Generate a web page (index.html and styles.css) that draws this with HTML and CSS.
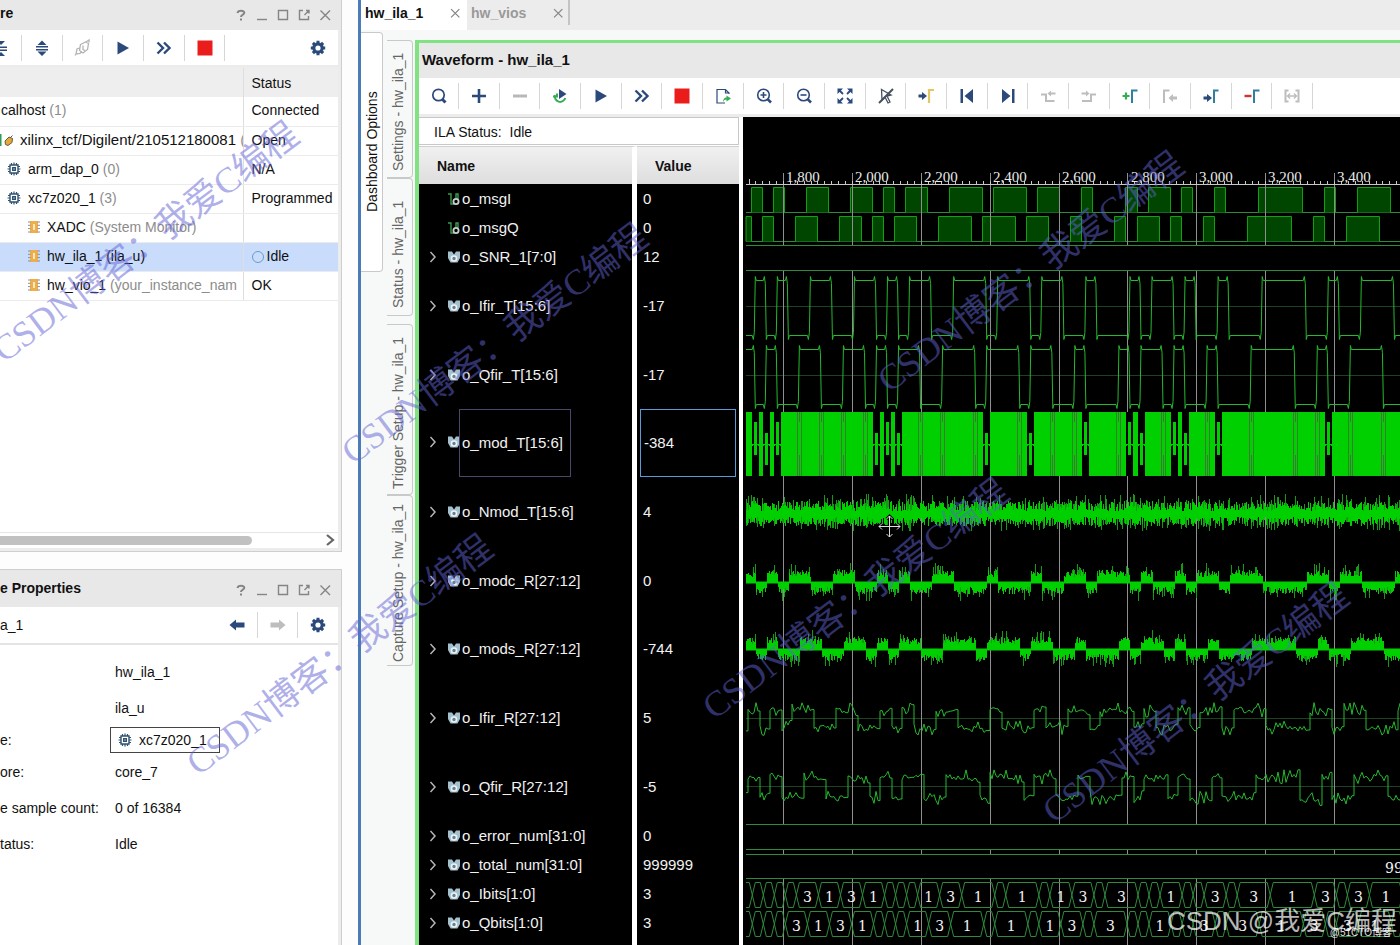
FILE: index.html
```
<!DOCTYPE html>
<html lang="en">
<head>
<meta charset="utf-8">
<title>Hardware Manager - hw_ila_1</title>
<link rel="stylesheet" href="styles.css">
</head>
<body>
<svg class="defs" aria-hidden="true">
  <symbol id="i-collapse" viewBox="0 0 24 24"><path class="navy" d="M6 10.500h12v1.500H6zM6 13.500h12V15H6zM8 5h8l-4 4zM8 20h8l-4-4z"/></symbol>
  <symbol id="i-expand" viewBox="0 0 24 24"><path class="navy" d="M6 10h12v1.500H6zM6 13h12v1.500H6zM7.500 9h9L12 4.500zM7.500 15.500h9L12 20z"/></symbol>
  <symbol id="i-plug" viewBox="0 0 24 24"><g fill="none" stroke="#b4b4b4" stroke-width="1.300"><path d="M9.500 8.500l5-2.500 3 1.500-1 6-4.500 3.500-3.500-2.500zM15 6l3-2v2.500M12 9.500v4l2 1M8.500 12l-2.500 1-1 5 4-.5 2-2M5 18l-1 1.500"/></g></symbol>
  <symbol id="i-play" viewBox="0 0 24 24"><path class="navy" d="M6.500 5.500v13L18 12z"/></symbol>
  <symbol id="i-fast" viewBox="0 0 24 24"><path class="nline" stroke-width="2.400" d="M5.500 6.500l5.500 5.500-5.500 5.500M12 6.500l5.500 5.500-5.500 5.500"/></symbol>
  <symbol id="i-stop" viewBox="0 0 24 24"><path fill="#ea1c1c" d="M4.500 4.500h15v15h-15z"/></symbol>
  <symbol id="i-gear" viewBox="0 0 24 24"><g stroke="#2b4a7b" fill="none"><circle cx="12" cy="12" r="4.200" stroke-width="3.200"/><path stroke-width="3" d="M12 4.800v2.500M12 16.700v2.500M4.800 12h2.500M16.700 12h2.500M6.900 6.900l1.700 1.700M15.400 15.400l1.700 1.700M17.100 6.900l-1.700 1.700M8.600 15.400l-1.700 1.700"/></g></symbol>
  <symbol id="i-search" viewBox="0 0 24 24"><circle class="nline" stroke-width="1.700" cx="11.500" cy="11" r="5.700"/><path class="nline" stroke-width="3" d="M15.500 15.500l3 3"/></symbol>
  <symbol id="i-plus" viewBox="0 0 24 24"><path class="nline" stroke-width="2.600" d="M12 5v14M5 12h14"/></symbol>
  <symbol id="i-minus" viewBox="0 0 24 24"><path fill="#b8b8b8" d="M5 10.500h14v3H5z"/></symbol>
  <symbol id="i-rerun" viewBox="0 0 24 24"><path fill="none" stroke="#35ad55" stroke-width="2" d="M7 11a5.200 5.200 0 1 0 10.300 3M5 12.500h4V9.500"/><path class="navy" d="M11 5v10l7.500-5z"/></symbol>
  <symbol id="i-export" viewBox="0 0 24 24"><path class="nline" stroke-width="1.200" d="M18 10V9l-3.500-3.500H6v13.500h8M14.500 5.500V9H18"/><path fill="#35ad55" d="M15.500 11.500l4.500 3-4.500 3v-2c-2 0-3 1-3.500 3 0-3 1-5 3.500-5z"/></symbol>
  <symbol id="i-zin" viewBox="0 0 24 24"><circle class="nline" stroke-width="1.600" cx="11.500" cy="11" r="5.800"/><path class="nline" stroke-width="1.600" d="M8.500 11h6M11.500 8v6"/><path class="nline" stroke-width="2.600" d="M15.800 15.300l3.200 3.200"/></symbol>
  <symbol id="i-zout" viewBox="0 0 24 24"><circle class="nline" stroke-width="1.600" cx="11.500" cy="11" r="5.800"/><path class="nline" stroke-width="1.600" d="M8.500 11h6"/><path class="nline" stroke-width="2.600" d="M15.800 15.300l3.200 3.200"/></symbol>
  <symbol id="i-fit" viewBox="0 0 24 24"><path class="navy" d="M4.500 4.500H10L4.500 10zM19.500 4.500H14l5.500 5.500zM4.500 19.500H10L4.500 14zM19.500 19.500H14l5.500-5.500z"/><path class="nline" stroke-width="1.800" d="M6 6l4 4M18 6l-4 4M6 18l4-4M18 18l-4-4"/></symbol>
  <symbol id="i-nocur" viewBox="0 0 24 24"><g fill="none" stroke="#454f5c"><path stroke-width="1.300" d="M7.500 5.500l9.500 5.500-4 1 3 6-2 1-3-6-3 3z"/><path stroke-width="2" d="M5 19L19 5"/></g></symbol>
  <symbol id="i-tocur" viewBox="0 0 24 24"><path class="navy" d="M4.500 10.500H8V8l5 4-5 4v-2.500H4.500z"/><path fill="none" stroke="#e2c766" stroke-width="2.200" d="M15 19V6h5"/></symbol>
  <symbol id="i-first" viewBox="0 0 24 24"><path class="navy" d="M5.500 5H8v14H5.500zM18 5v14l-8.500-7z"/></symbol>
  <symbol id="i-last" viewBox="0 0 24 24"><path class="navy" d="M16 5h2.500v14H16zM6 5v14l8.500-7z"/></symbol>
  <symbol id="i-prev" viewBox="0 0 24 24"><path class="gline" d="M5 10.500h5v6.500h8.500"/><path class="grey" d="M11.500 9.500L15 6.500v2h4.500v2H15v2z"/></symbol>
  <symbol id="i-next" viewBox="0 0 24 24"><path class="gline" d="M5 17h9v-6.500h5"/><path class="grey" d="M12.500 9.500L9 6.500v2H4.500v2H9v2z"/></symbol>
  <symbol id="i-addm" viewBox="0 0 24 24"><path fill="none" stroke="#35ad55" stroke-width="2.200" d="M4.500 12h7M8 8.500v7"/><path class="mline" d="M14 19V6.500h5.500"/></symbol>
  <symbol id="i-backm" viewBox="0 0 24 24"><path class="gline" d="M6 19V6.500h5.500"/><path class="grey" d="M10.500 14l4.500-4v2.500h4v3h-4V18z"/></symbol>
  <symbol id="i-fwdm" viewBox="0 0 24 24"><path class="navy" d="M4.500 12.500H8V10l5 4-5 4v-2.500H4.500z"/><path class="mline" d="M15 19V6.500h4.500"/></symbol>
  <symbol id="i-delm" viewBox="0 0 24 24"><path fill="#d0342c" d="M4.500 10.800h7v2.400h-7z"/><path class="mline" d="M14 19V6.500h5.500"/></symbol>
  <symbol id="i-swap" viewBox="0 0 24 24"><path class="gline" d="M5.500 5.500v13M18.500 5.500v13M5 6.500h3.500M5 17.500h3.500M15.500 6.500H19M15.500 17.500H19"/><path fill="none" stroke="#bdbdbd" stroke-width="1.300" d="M7.500 12h9M10 9.500L7.500 12l2.500 2.500M14 9.500l2.500 2.500-2.500 2.500"/></symbol>
  <symbol id="i-left" viewBox="0 0 24 24"><path class="navy" d="M4.500 12L11 6.500v3h8.500v5H11v3z"/></symbol>
  <symbol id="i-right" viewBox="0 0 24 24"><path class="grey" d="M19.500 12L13 6.500v3H4.500v5H13v3z"/></symbol>
  <symbol id="w-help" viewBox="0 0 16 16"><path class="wline bold" d="M4.500 6c.5-3 7-3 6.800 0C11.100 7.800 8 7.500 8 10M8 11.500v2"/></symbol>
  <symbol id="w-min" viewBox="0 0 16 16"><path class="wline" d="M3 12.500h10"/></symbol>
  <symbol id="w-max" viewBox="0 0 16 16"><path class="wline" d="M3.500 3.500h9v9h-9z"/></symbol>
  <symbol id="w-pop" viewBox="0 0 16 16"><path class="wline" d="M7 3.500H3.500v9h9V9M10 3.500h3v3M13 3.500L8.500 8"/></symbol>
  <symbol id="w-x" viewBox="0 0 16 16"><path class="wline" d="M3.500 3.500l9.500 9.500M13 3.500L3.500 13"/></symbol>
  <symbol id="r-chip" viewBox="0 0 14 14"><g fill="none" stroke="#2f5270"><path stroke-width="1.400" d="M3 3h8v8H3z"/><path stroke-width="1.400" d="M5.700 5.700h2.600v2.600H5.700z"/><path stroke-width="1.200" d="M4.500 1v2M7 .5V3M9.500 1v2M4.500 11v2M7 11v2.500M9.500 11v2M1 4.500h2M.5 7H3M1 9.500h2M11 4.500h2M11 7h2.500M11 9.500h2"/></g></symbol>
  <symbol id="r-core" viewBox="0 0 14 14"><path fill="#eeae4c" d="M3 1h8v12H3z"/><path fill="none" stroke="#8a8f98" stroke-width="1" d="M1 2h2.500M1 5.300h2.500M1 8.600h2.500M1 12h2.500M10.500 2H13M10.500 5.300H13M10.500 8.600H13M10.500 12H13"/><path stroke="#fff6dc" stroke-width="1.600" d="M7 4v6"/></symbol>
  <symbol id="r-plug" viewBox="0 0 14 14"><path fill="#2e9c55" d="M0 1h1.500v12H0z"/><path fill="#e2a93b" stroke="#6b5a35" d="M5 8l4-4 3.500 1.500-.5 4-4 3-2.500-1z"/><path stroke="#555" d="M10 5l2.500-2.500"/></symbol>
  <symbol id="s-bit" viewBox="0 0 14 14"><path fill="none" stroke="#3d9a50" stroke-width="1.400" d="M1 2h3v10h3.500M9 6V2h2v5"/><circle cx="9" cy="9.500" r="2.600" fill="none" stroke="#c8d0d0" stroke-width="1.800"/></symbol>
  <symbol id="s-bus" viewBox="0 0 14 14"><path fill="#a3c0ce" d="M1 1.500h4l2 3 2-3h4V8l-2.500 4.500h-7L1 8z"/><circle cx="7" cy="8.500" r="2.500" fill="#66808f" stroke="#eef2f4" stroke-width="1.600"/></symbol>
  <symbol id="s-chev" viewBox="0 0 10 14"><path fill="none" stroke="#b5b5b5" stroke-width="1.500" d="M2.500 2l4.500 5-4.500 5"/></symbol>
</svg>

<div class="app">
  <aside class="side">
    <section class="panel tree-panel">
      <header class="panel-head"><h2>re</h2>
        <div class="win"><button aria-label="Help"><svg><use href="#w-help"/></svg></button><button aria-label="Minimize"><svg><use href="#w-min"/></svg></button><button aria-label="Maximize"><svg><use href="#w-max"/></svg></button><button aria-label="Float"><svg><use href="#w-pop"/></svg></button><button aria-label="Close"><svg><use href="#w-x"/></svg></button></div>
      </header>
      <div class="bar bar-tree">
        <button aria-label="Collapse all"><svg><use href="#i-collapse"/></svg></button><button aria-label="Expand all"><svg><use href="#i-expand"/></svg></button><button aria-label="Connect"><svg><use href="#i-plug"/></svg></button><button aria-label="Run trigger"><svg><use href="#i-play"/></svg></button><button aria-label="Run immediate"><svg><use href="#i-fast"/></svg></button><button aria-label="Stop"><svg><use href="#i-stop"/></svg></button><button class="gear" aria-label="Settings"><svg><use href="#i-gear"/></svg></button>
      </div>
      <div class="tree-wrap">
        <table class="tree">
          <thead><tr><th class="c-name"></th><th>Status</th></tr></thead>
          <tbody>
            <tr><td class="l0">calhost <i>(1)</i></td><td>Connected</td></tr>
            <tr><td class="l1"><svg><use href="#r-plug"/></svg><span class="addr">xilinx_tcf/Digilent/210512180081 <i>(2)</i></span></td><td>Open</td></tr>
            <tr><td class="l2"><svg><use href="#r-chip"/></svg>arm_dap_0 <i>(0)</i></td><td>N/A</td></tr>
            <tr><td class="l2"><svg><use href="#r-chip"/></svg>xc7z020_1 <i>(3)</i></td><td>Programmed</td></tr>
            <tr><td class="l3"><svg><use href="#r-core"/></svg>XADC <i>(System Monitor)</i></td><td></td></tr>
            <tr class="sel"><td class="l3"><svg><use href="#r-core"/></svg>hw_ila_1 (ila_u)</td><td><span class="ring"></span>Idle</td></tr>
            <tr><td class="l3"><svg><use href="#r-core"/></svg>hw_vio_1 <i>(your_instance_nam</i></td><td>OK</td></tr>
          </tbody>
        </table>
      </div>
      <div class="hscroll"><div class="thumb"></div><svg viewBox="0 0 12 16"><path fill="none" stroke="#666" stroke-width="2.200" d="M3 3l6 5-6 5"/></svg></div>
    </section>

    <section class="panel prop-panel">
      <header class="panel-head tall-head"><h2>e Properties</h2>
        <div class="win"><button aria-label="Help"><svg><use href="#w-help"/></svg></button><button aria-label="Minimize"><svg><use href="#w-min"/></svg></button><button aria-label="Maximize"><svg><use href="#w-max"/></svg></button><button aria-label="Float"><svg><use href="#w-pop"/></svg></button><button aria-label="Close"><svg><use href="#w-x"/></svg></button></div>
      </header>
      <div class="bar bar-prop"><span>a_1</span>
        <button aria-label="Back"><svg><use href="#i-left"/></svg></button><button aria-label="Forward"><svg><use href="#i-right"/></svg></button><button class="gear" aria-label="Settings"><svg><use href="#i-gear"/></svg></button>
      </div>
      <dl class="props">
        <dt></dt><dd>hw_ila_1</dd>
        <dt></dt><dd>ila_u</dd>
        <dt>e:</dt><dd><button class="device"><svg><use href="#r-chip"/></svg>xc7z020_1</button></dd>
        <dt>ore:</dt><dd>core_7</dd>
        <dt>e sample count:</dt><dd>0 of 16384</dd>
        <dt>tatus:</dt><dd>Idle</dd>
      </dl>
    </section>
  </aside>

  <main class="work">
    <nav class="tabs">
      <div class="tab on"><button>hw_ila_1</button><button class="x" aria-label="Close hw_ila_1"><svg><use href="#w-x"/></svg></button></div>
      <div class="tab"><button>hw_vios</button><button class="x" aria-label="Close hw_vios"><svg><use href="#w-x"/></svg></button></div>
    </nav>
    <div class="dash">
      <div class="rail rail-a"><button>Dashboard Options</button></div>
      <div class="rail rail-b">
        <button class="v1">Settings - hw_ila_1</button>
        <button class="v2">Status - hw_ila_1</button>
        <button class="v3">Trigger Setup - hw_ila_1</button>
        <button class="v4">Capture Setup - hw_ila_1</button>
      </div>
      <section class="wave-panel">
        <h2 class="wave-title">Waveform - hw_ila_1</h2>
        <div class="bar bar-wave">
          <button aria-label="Search"><svg><use href="#i-search"/></svg></button><button aria-label="Add"><svg><use href="#i-plus"/></svg></button><button aria-label="Remove"><svg><use href="#i-minus"/></svg></button><button aria-label="Auto re-trigger"><svg><use href="#i-rerun"/></svg></button><button aria-label="Run trigger"><svg><use href="#i-play"/></svg></button><button aria-label="Run immediate"><svg><use href="#i-fast"/></svg></button><button aria-label="Stop"><svg><use href="#i-stop"/></svg></button><button aria-label="Export"><svg><use href="#i-export"/></svg></button><button aria-label="Zoom in"><svg><use href="#i-zin"/></svg></button><button aria-label="Zoom out"><svg><use href="#i-zout"/></svg></button><button aria-label="Zoom fit"><svg><use href="#i-fit"/></svg></button><button aria-label="Free cursor"><svg><use href="#i-nocur"/></svg></button><button aria-label="Go to cursor"><svg><use href="#i-tocur"/></svg></button><button aria-label="First"><svg><use href="#i-first"/></svg></button><button aria-label="Last"><svg><use href="#i-last"/></svg></button><button aria-label="Previous transition"><svg><use href="#i-prev"/></svg></button><button aria-label="Next transition"><svg><use href="#i-next"/></svg></button><button aria-label="Add marker"><svg><use href="#i-addm"/></svg></button><button aria-label="Previous marker"><svg><use href="#i-backm"/></svg></button><button aria-label="Next marker"><svg><use href="#i-fwdm"/></svg></button><button aria-label="Delete marker"><svg><use href="#i-delm"/></svg></button><button aria-label="Swap cursors"><svg><use href="#i-swap"/></svg></button>
        </div>
        <div class="wave-body">
          <div class="signals">
            <p class="ila">ILA Status:&nbsp; Idle</p>
            <table class="sig">
              <thead><tr><th>Name</th><th>Value</th></tr></thead>
              <tbody>
                <tr><td class="bit"><svg><use href="#s-bit"/></svg>o_msgI</td><td>0</td></tr>
                <tr><td class="bit"><svg><use href="#s-bit"/></svg>o_msgQ</td><td>0</td></tr>
                <tr><td><svg class="ch"><use href="#s-chev"/></svg><svg><use href="#s-bus"/></svg>o_SNR_1[7:0]</td><td>12</td></tr>
                <tr class="tall"><td><svg class="ch"><use href="#s-chev"/></svg><svg><use href="#s-bus"/></svg>o_Ifir_T[15:6]</td><td>-17</td></tr>
                <tr class="tall"><td><svg class="ch"><use href="#s-chev"/></svg><svg><use href="#s-bus"/></svg>o_Qfir_T[15:6]</td><td>-17</td></tr>
                <tr class="tall picked"><td><svg class="ch"><use href="#s-chev"/></svg><svg><use href="#s-bus"/></svg><span>o_mod_T[15:6]</span></td><td><span>-384</span></td></tr>
                <tr class="tall"><td><svg class="ch"><use href="#s-chev"/></svg><svg><use href="#s-bus"/></svg>o_Nmod_T[15:6]</td><td>4</td></tr>
                <tr class="tall"><td><svg class="ch"><use href="#s-chev"/></svg><svg><use href="#s-bus"/></svg>o_modc_R[27:12]</td><td>0</td></tr>
                <tr class="tall"><td><svg class="ch"><use href="#s-chev"/></svg><svg><use href="#s-bus"/></svg>o_mods_R[27:12]</td><td>-744</td></tr>
                <tr class="tall"><td><svg class="ch"><use href="#s-chev"/></svg><svg><use href="#s-bus"/></svg>o_Ifir_R[27:12]</td><td>5</td></tr>
                <tr class="tall"><td><svg class="ch"><use href="#s-chev"/></svg><svg><use href="#s-bus"/></svg>o_Qfir_R[27:12]</td><td>-5</td></tr>
                <tr><td><svg class="ch"><use href="#s-chev"/></svg><svg><use href="#s-bus"/></svg>o_error_num[31:0]</td><td>0</td></tr>
                <tr><td><svg class="ch"><use href="#s-chev"/></svg><svg><use href="#s-bus"/></svg>o_total_num[31:0]</td><td>999999</td></tr>
                <tr><td><svg class="ch"><use href="#s-chev"/></svg><svg><use href="#s-bus"/></svg>o_Ibits[1:0]</td><td>3</td></tr>
                <tr><td><svg class="ch"><use href="#s-chev"/></svg><svg><use href="#s-bus"/></svg>o_Qbits[1:0]</td><td>3</td></tr>
                <tr><td></td><td></td></tr>
              </tbody>
            </table>
          </div>
          <div class="plot"><svg id="plot" role="img" aria-label="Captured waveforms"></svg></div>
        </div>
      </section>
    </div>
  </main>

  <div class="marks" aria-hidden="true">
    <span class="mark m1">CSDN博客：我爱C编程</span>
    <span class="mark m2">CSDN博客：我爱C编程</span>
    <span class="mark m3">CSDN博客：我爱C编程</span>
    <span class="mark m4">CSDN博客：我爱C编程</span>
    <span class="mark m5">CSDN博客：我爱C编程</span>
    <span class="mark m6">CSDN博客：我爱C编程</span>
    <span class="credit">CSDN @我爱C编程</span>
    <span class="credit-small">@51CTO博客</span>
  </div>
</div>
<script src="wave.js"></script>
</body>
</html>
```
FILE: styles.css
```
* { box-sizing: border-box; }
body { margin: 0; font: 14px/20px "Liberation Sans", Arial, sans-serif; color: #111; background: #fdfdfd; overflow: hidden; }
h2, p, dl, dd { margin: 0; }
h2 { font-size: 14px; line-height: 20px; }
button { border: 0; background: none; padding: 0; margin: 0; font: inherit; color: inherit; cursor: pointer; }
svg { display: block; }
i { font-style: normal; color: #8c8c8c; }
.defs { position: absolute; width: 0; height: 0; }
.navy { fill: #2b4a7b; }
.nline { fill: none; stroke: #2b4a7b; }
.grey { fill: #bdbdbd; }
.gline { fill: none; stroke: #bdbdbd; stroke-width: 2; }
.mline { fill: none; stroke: #2f7f9f; stroke-width: 2px; }
.wline { fill: none; stroke: #858585; stroke-width: 1.4px; }
.wline.bold { stroke-width: 2px; }

.app { position: relative; display: flex; height: 100vh; overflow: hidden; }
.side { flex: 0 0 342px; display: flex; flex-direction: column; gap: 17px; }
.panel { display: flex; flex-direction: column; min-height: 0; border-right: 1px solid #cfcfcf; background: #fff; overflow: hidden; box-shadow: inset -3px 0 #ececec; padding-right: 3px; }
.tree-panel { flex: 552 1 0; border-bottom: 1px solid #cfcfcf; }
.prop-panel { flex: 376 1 0; border-top: 1px solid #cfcfcf; }
.panel-head { display: flex; align-items: center; justify-content: space-between; height: 30px; margin-right: -3px; padding-right: 8px; background: #e8e8e8; }
.panel-head h2 { padding-bottom: 5px; }
.tall-head { height: 37px; }
.tall-head h2 { padding-bottom: 0; }
.tall-head .win { padding-top: 4px; }
.win { display: flex; gap: 5px; }
.win button, .win svg { width: 16px; height: 16px; }

.bar { display: flex; align-items: center; height: 36px; background: #fff; }
.bar button { flex: none; width: 41px; height: 26px; display: flex; align-items: center; justify-content: center; border-right: 1px solid #d6d6d6; }
.bar button:nth-child(3n) { width: 40px; }
.bar svg { width: 24px; height: 24px; }
.bar .gear { width: 40px; border: 0; margin-left: auto; }
.bar-tree { height: 38px; margin-left: -19px; border-bottom: 3px solid #ececec; }
.bar-prop { height: 38px; border-bottom: 2px solid #e4e4e4; }
.bar-prop span { flex: 1; }
.bar-prop .gear { margin: 0; }

.tree-wrap { flex: 1; }
.tree { width: 100%; table-layout: fixed; border-collapse: collapse; }
.tree th { height: 29px; background: #eee; font-weight: 400; text-align: left; padding: 0 0 0 8px; }
.c-name { width: 243px; }
.tree th:first-child, .tree td:first-child { border-right: 1px solid #dedede; }
.tree td { height: 29px; padding: 0 0 2px 8px; border-bottom: 1px solid #ebebeb; white-space: nowrap; overflow: hidden; }
.tree td svg { display: inline-block; width: 14px; height: 14px; vertical-align: -2px; }
.tree td.l0 { padding-left: 1px; }
.tree td.l1 { padding-left: 0; }
.tree td.l1 svg { margin-right: 6px; }
.addr { font-size: 15px; }
.tree td.l2 { padding-left: 7px; }
.tree td.l2 svg { margin-right: 7px; }
.tree td.l3 { padding-left: 27px; }
.tree td.l3 svg { margin-right: 6px; }
.tree .sel td { background: #c9dcfb; }
.ring { display: inline-block; width: 12px; height: 12px; margin-right: 3px; border: 1px solid #6b9cc4; border-radius: 50%; vertical-align: -2px; }
.hscroll { display: flex; align-items: center; justify-content: space-between; height: 19px; border-top: 1px solid #e6e6e6; border-bottom: 3px solid #ececec; padding-right: 2px; }
.thumb { width: 75%; height: 9px; background: #c1c1c1; border-radius: 0 5px 5px 0; }
.hscroll svg { width: 12px; height: 16px; }

.props { display: grid; grid-template-columns: 115px 1fr; grid-template-rows: 36px 36px 28px 36px 36px 36px; align-items: center; padding-top: 9px; }
.props dt { white-space: nowrap; }
.device { display: flex; align-items: center; gap: 7px; height: 26px; margin-left: -5px; padding: 0 12px 0 7px; border: 1px solid #444; }
.device svg { width: 14px; height: 14px; }

.work { flex: 1; min-width: 0; margin-left: 16px; border-left: 3px solid #4c7cb8; display: flex; flex-direction: column; background: #f7f9f8; }
.tabs { display: flex; height: 30px; background: #ececec; }
.tab { display: flex; align-items: flex-start; padding: 3px 5px 0 4px; font-weight: 700; color: #999; }
.tab.on { background: #fff; color: #111; width: 106px; }
.tab:last-child { width: 103px; height: 25px; border-right: 2px solid #c4c4c4; padding-right: 3px; }
.tab .x { margin: 3px 0 0 auto; }
.tab .x svg { width: 14px; height: 14px; }
.dash { flex: 1; display: flex; min-height: 0; }
.rail { flex: none; display: flex; flex-direction: column; align-items: flex-start; }
.rail button { writing-mode: vertical-rl; transform: rotate(180deg); text-align: center; border: 1px solid #c9c9c9; border-right: 0; border-radius: 4px 0 0 4px; white-space: nowrap; }
.rail-a { width: 26px; padding-top: 2px; }
.rail-a button { width: 22px; height: 240px; background: #fff; line-height: 20px; }
.rail-b { width: 28px; padding-top: 10px; color: #666; }
.rail-b button { width: 26px; padding: 0 0 6px 3px; line-height: 20px; }
.v1 { height: 138px; }
.rail-b .v2 { height: 138px; padding-bottom: 14px; }
.v3 { height: 171px; margin-top: 8px; }
.v4 { height: 171px; }

.wave-panel { flex: 1; min-width: 0; margin-top: 10px; border: solid #80e280; border-width: 3px 0 0 4px; display: flex; flex-direction: column; background: #fff; }
.wave-title { flex: none; height: 35px; padding: 7px 0 0 3px; background: #e8e8e8; font-size: 15px; }
.bar-wave { flex: none; height: 39px; border-bottom: 3px solid #ececec; overflow: hidden; }
.bar-wave button:first-child { width: 40px; }
.wave-body { flex: 1; display: flex; min-height: 0; overflow: hidden; font-size: 15px; }
.signals { flex: 0 0 320px; margin-right: 4px; }
.ila { height: 28px; padding: 4px 0 0 15px; border: 1px solid #c8c8c8; border-left: 0; font-size: 14px; }
.sig { width: 320px; table-layout: fixed; border-collapse: separate; border-spacing: 0; margin-top: 1px; color: #f2f2f2; }
.sig th { height: 38px; padding: 0 0 0 18px; text-align: left; color: #111; font-size: 14px; background: linear-gradient(#f0f0f0, #dededf); border-top: 1px solid #cfcfcf; }
.sig th:first-child, .sig td:first-child { width: 218px; border-right: 5px solid #fff; background-clip: padding-box; }
.sig td { height: 29px; padding: 0 0 0 6px; background: #000; white-space: nowrap; }
.sig td:first-child { padding-left: 9px; }
.sig td.bit:first-child { padding-left: 28px; }
.sig .tall td { height: 69px; }
.sig .tall:nth-child(3n) td { height: 68px; }
.sig svg { display: inline-block; width: 14px; height: 14px; vertical-align: -2px; margin-right: 1px; }
.sig svg.ch { width: 10px; margin-right: 9px; }
.picked span { display: inline-block; height: 68px; line-height: 66px; vertical-align: middle; border: 1px solid #48486a; }
.picked td:first-child span { width: 112px; margin-left: -3px; padding-left: 2px; }
.sig .picked td:last-child { padding: 0 3px; }
.picked td:last-child span { display: block; border-color: #5b9ad8; padding-left: 3px; }
.plot { flex: 1; min-width: 0; background: #000; overflow: hidden; }
.plot svg { width: 100%; height: 100%; }
.plot path { fill: none; }
.plot .grid { stroke: #8f8f8f; }
.plot .rule { stroke: #c8c8c8; }
.plot .num { fill: #e8e8e8; font: 15px "Liberation Serif", serif; }
.plot .bus { fill: #f4f4f4; font: 14px "DejaVu Serif", serif; text-anchor: middle; }
.plot .rail-line { stroke: #2f8a3c; }
.plot .mid { stroke: #1d4221; }
.plot .logic { fill: #004600; stroke: #12a012; }
.plot .trace { stroke: #26b82e; }
.plot .solid { fill: #00cf00; }
.plot .dense { stroke: #00cf00; }
.plot .spike { stroke: #149a14; }
.plot .faint { stroke: #3c7a36; }
.plot .cut { stroke: #000; }
.plot .base { stroke: #00cf00; stroke-width: 2; }
.plot .cell { stroke: #2f8a3c; }
.plot .halo { stroke: #000; stroke-width: 3; }
.plot .pointer { stroke: #ddd; }

.marks { position: absolute; inset: 0; overflow: hidden; pointer-events: none; }
.mark { position: absolute; font: 36px/40px "Liberation Serif", "Noto Sans CJK SC", serif; color: rgba(98, 98, 212, 0.5); white-space: nowrap; transform-origin: 0 100%; transform: rotate(-37deg); }
.m1 { left: 9px; top: 330px; }
.m2 { left: 203px; top: 743px; }
.m3 { left: 358px; top: 432px; }
.m4 { left: 719px; top: 687px; }
.m5 { left: 894px; top: 360px; }
.m6 { left: 1059px; top: 791px; }
.credit { position: absolute; right: 3px; bottom: 4px; font: 26px/40px "Liberation Sans", "Noto Sans CJK SC", sans-serif; color: rgba(255, 255, 255, 0.72); }
.credit-small { position: absolute; right: 8px; bottom: 4px; font: 10px/16px "Liberation Sans", "Noto Sans CJK SC", sans-serif; color: rgba(255, 255, 255, 0.9); }
```
FILE: wave.js
```
(function () {
  var svg = document.getElementById('plot');
  var NS = 'http://www.w3.org/2000/svg';
  var BIT = 11.02, X0 = 8.3, LEFT = 3, RIGHT = 665;
  // bit intervals [from, to) during which each signal is high
  var msgI = [[0,1],[2,3],[5,7],[9,11],[12,13],[14,16],[18,21],[22,25],[26,28],[30,31],[34,35],[36,38],[39,40],[42,43],[46,50],[52,53],[55,58]];
  var msgQ = [[-1,0]].concat(msgI.slice(1).map(function (r) { return [r[0] - 1, r[1] - 1]; }));
  var demI = [[-1,0],[1,2],[3,5],[7,9],[11,12],[13,14],[16,18],[21,22],[25,26],[28,30],[31,34],[35,36],[38,39],[40,42],[43,46],[50,52],[53,55],[58,60]];
  var cellsI = [0,1,2,3,4,6,8,10,12,13,14,15,17,19,22,23,26,27,29,31,32,35,36,37,39,40,41,43,44,47,51,53,54,56,59,60];
  var labels = {4:3,6:1,8:3,10:1,15:1,17:3,19:1,23:1,27:1,29:3,32:3,37:1,41:3,44:3,47:1,51:3,54:3,56:1};

  var seed = 20817;
  function rnd() { seed = (seed * 1103515245 + 12345) % 2147483648; return seed / 2147483648; }
  function peak() { return Math.pow(rnd(), 2); }
  function at(bit, shift) { return X0 + (shift || 0) + bit * BIT; }
  function snap(v) { return Math.floor(v) + 0.5; }
  function path(cls, d) { var p = document.createElementNS(NS, 'path'); p.setAttribute('class', cls); p.setAttribute('d', d); svg.appendChild(p); }
  function text(cls, x, y, s) { var t = document.createElementNS(NS, 'text'); t.setAttribute('class', cls); t.setAttribute('x', x); t.setAttribute('y', y); t.textContent = s; svg.appendChild(t); }
  function hline(cls, y) { path(cls, 'M' + LEFT + ' ' + y + 'H' + RIGHT); }
  function isHigh(list, bit) { return list.some(function (r) { return bit >= r[0] && bit < r[1]; }); }

  function logic(list, top, bottom) {
    hline('rail-line', bottom);
    list.forEach(function (r) {
      var a = Math.max(LEFT, snap(at(r[0]))), b = snap(at(r[1]));
      path('logic', 'M' + a + ' ' + bottom + 'V' + top + 'H' + b + 'V' + bottom);
    });
  }
  function filtered(list, hi, lo) {
    var level = isHigh(list, -1), y = level ? hi : lo, d = 'M' + LEFT + ' ' + y;
    for (var k = 0; k <= 60; k++) {
      var next = isHigh(list, k);
      if (next === level) continue;
      var s = next ? -1 : 1, from = next ? lo : hi, to = next ? hi : lo, x = at(k, 3);
      d += 'H' + (x - 2) + 'l1 ' + (-4 * s) + 'L' + x + ' ' + (from + 3 * s) + 'L' + (x + 1) + ' ' + (to + 4 * s) + 'l1 ' + (-4 * s) + 'V' + to;
      level = next;
    }
    path('trace', d + 'H' + RIGHT);
  }
  function demod(list, base) {
    var d = '', f = '';
    for (var x = LEFT; x < RIGHT; x++) {
      var bit = Math.floor((x - X0 - 4) / BIT), s = isHigh(list, bit) ? -1 : 1;
      d += 'M' + (x + 0.5) + ' ' + base + 'v' + s * Math.round(5 + 7 * rnd());
      if (rnd() > 0.6) f += 'M' + (x + 0.5) + ' ' + base + 'v' + s * Math.round(8 + 11 * peak());
    }
    path('spike', f);
    path('dense', d);
    hline('base', base + 0.5);
  }
  function noisy(list, hi, lo) {
    var d = '', last = null;
    for (var x = LEFT; x < RIGHT; x += 2) {
      var up = isHigh(list, Math.floor((x - X0 - 7) / BIT)), y = up ? hi : lo;
      y += (rnd() - 0.5) * (rnd() > 0.6 ? 15 : 6);
      if (last !== null && last !== up) d += 'H' + x;
      d += (x === LEFT ? 'M' : 'L') + x + ' ' + y.toFixed(1);
      last = up;
    }
    path('trace', d);
  }
  function cells(shift, top, bottom) {
    var m = (top + bottom) / 2, d = '';
    [-1].concat(cellsI).forEach(function (c, i, all) {
      if (i === all.length - 1) return;
      var a = at(c - shift, 1), b = at(all[i + 1] - shift, 1);
      if (b < LEFT) return;
      if (a < LEFT) d += 'M' + LEFT + ' ' + top + 'H' + (b - 3) + 'L' + b + ' ' + m + 'L' + (b - 3) + ' ' + bottom + 'H' + LEFT;
      else d += 'M' + a + ' ' + m + 'L' + (a + 3) + ' ' + top + 'H' + (b - 3) + 'L' + b + ' ' + m + 'L' + (b - 3) + ' ' + bottom + 'H' + (a + 3) + 'Z';
      if (labels[c]) text('bus', (a + b) / 2, m + 7, labels[c]);
    });
    path('cell', d);
  }

  // ruler and grid
  var i, x, ticks = '', grid = '';
  for (i = -5; i < 91; i++) { x = snap(40.5 + i * 6.89); ticks += 'M' + x + ' 67V' + (i === -5 ? 62 : 64); }
  for (i = 0; i < 9; i++) {
    x = snap(40.4 + i * 68.9);
    grid += 'M' + x + ' 56V128M' + x + ' 154V707M' + x + ' 733V737M' + x + ' 762V830';
  }
  logic(msgI, 70.5, 95.5);
  logic(msgQ, 99.5, 124.5);
  [189.5, 258.5, 601.5, 669.5].forEach(function (y) { hline('mid', y); });
  path('grid', grid);
  path('rule', ticks);
  hline('rule', 67.5);
  for (i = 0; i < 9; i++) {
    text('num', Math.round(43 + i * 68.9), 65, (1800 + i * 200).toLocaleString('en-US'));
  }
  [128.5, 153.5, 707.5, 732.5, 737.5, 761.5].forEach(function (y) { hline('rail-line', y); });

  filtered(msgI, 163.5, 218.5);
  filtered(msgQ, 232.5, 287.5);

  // modulated carrier: notch where both channels flip, thin stripes where only Q flips
  path('solid', 'M' + LEFT + ' 295H' + RIGHT + 'V359H' + LEFT + 'Z');
  for (var k = 0; k <= 60; k++) {
    var q = isHigh(msgQ, k) !== isHigh(msgQ, k - 1), c = isHigh(msgI, k) !== isHigh(msgI, k - 1);
    if (!q) continue;
    x = snap(at(k, 4));
    if (c) {
      var inner = k % 2 ? [316, 348] : [305, 338];
      path('cut', 'M' + (x - 3) + ' 295V327M' + (x - 3) + ' 329V359M' + (x - 2) + ' 295V359M' + (x + 2) + ' 295V359M' + (x + 3) + ' 295V327M' + (x + 3) + ' 329V359');
      path('cut', [-1, 0, 1].map(function (o) { return 'M' + (x + o) + ' 295V' + inner[0] + 'M' + (x + o) + ' ' + inner[1] + 'V359'; }).join(''));
      path('dense', 'M' + (x - 3) + ' 327.500h7');
    } else {
      path('faint', 'M' + (x - 2) + ' 295V359M' + (x + 2) + ' 295V359M' + x + ' 295V305M' + x + ' 338V359');
    }
  }

  // noisy channel output
  var core = '', spikes = '';
  for (x = LEFT; x < RIGHT; x++) {
    core += 'M' + (x + 0.5) + ' ' + (397 - Math.round(3 + 10 * rnd())) + 'V' + (397 + Math.round(3 + 9 * rnd()));
    if (rnd() > 0.6) spikes += 'M' + (x + 0.5) + ' ' + (396 - Math.round(9 + 10 * peak())) + 'V' + (397 + Math.round(8 + 9 * peak()));
  }
  path('spike', spikes);
  path('dense', core);

  demod(demI, 465);
  demod(msgQ, 532);
  noisy(demI, 593, 611);
  noisy(msgQ, 660, 681);

  text('bus', 651, 756, '99');
  cells(0, 765.5, 790.5);
  cells(1, 794.5, 819.5);

  // move pointer
  var arrows = 'M146.500 399V420M136 409.500H157M143.500 402L146.500 399l3 3M143.500 417l3 3 3-3M139 406.500l-3 3 3 3M154 406.500l3 3-3 3';
  path('halo', arrows);
  path('pointer', arrows);
})();
```
